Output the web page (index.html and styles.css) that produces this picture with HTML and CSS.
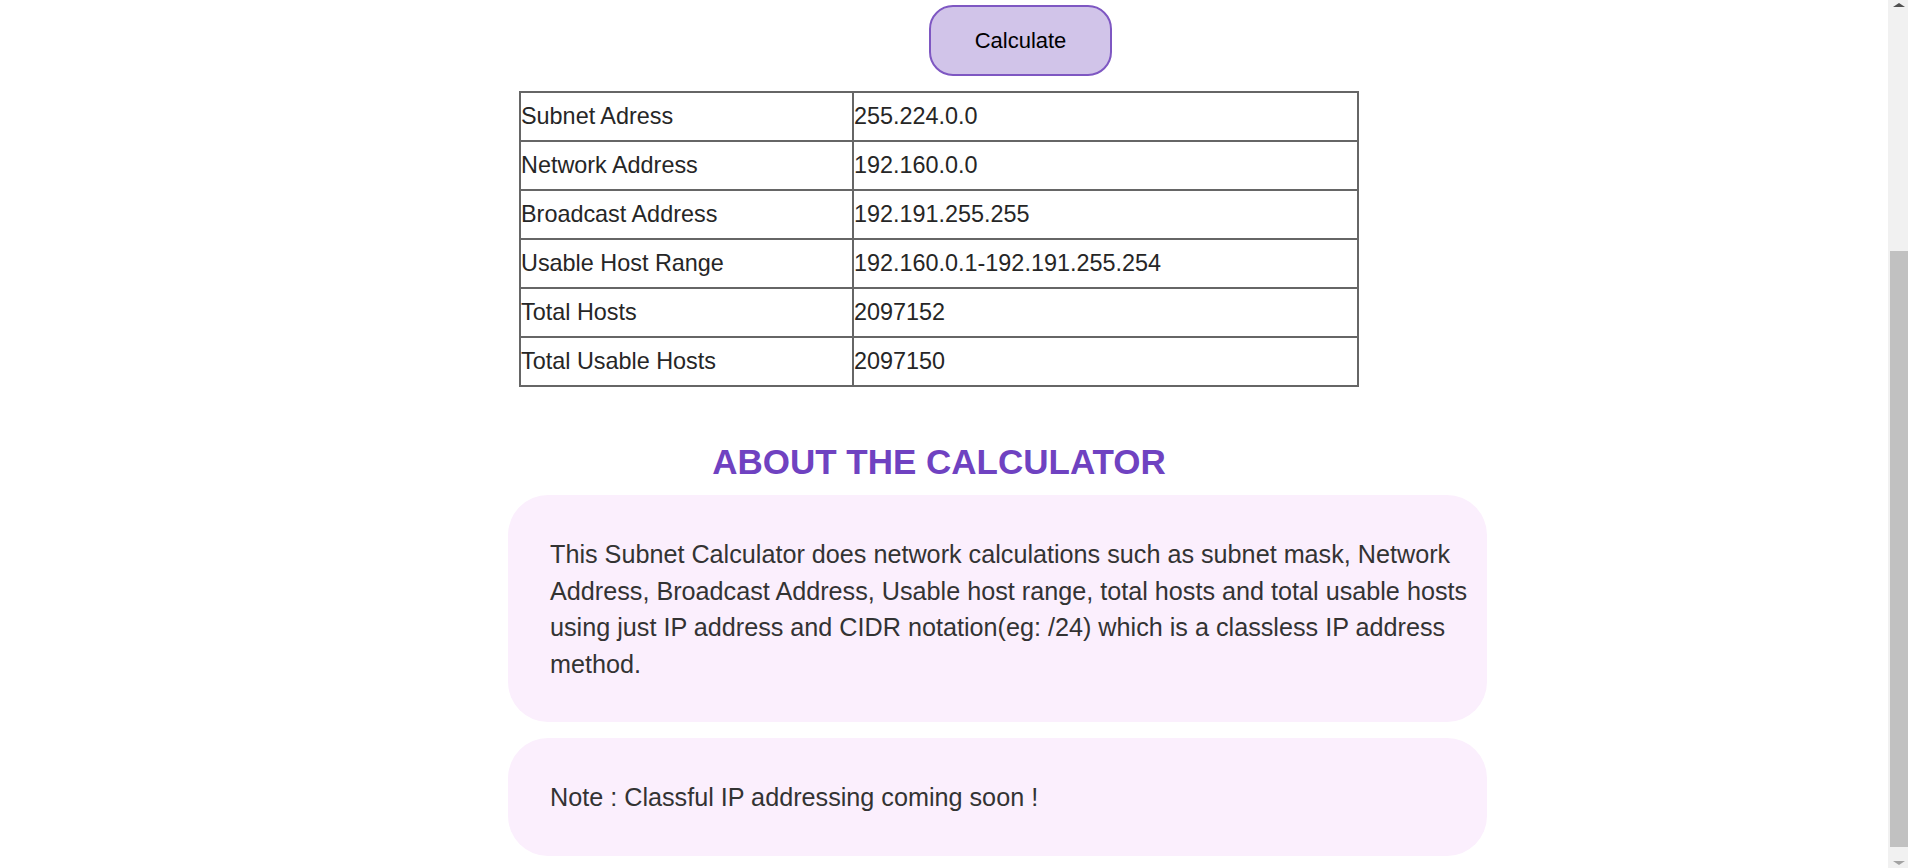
FILE: index.html
```html
<!DOCTYPE html>
<html lang="en">
<head>
<meta charset="utf-8">
<title>Subnet Calculator</title>
<link rel="stylesheet" href="styles.css">
</head>
<body>
<div class="page">
  <section class="calc">
    <div class="btn-row">
      <button class="calc-btn" type="button">Calculate</button>
    </div>
    <table class="result">
      <colgroup>
        <col class="col-label">
        <col class="col-value">
      </colgroup>
      <tbody>
        <tr><td>Subnet Adress</td><td>255.224.0.0</td></tr>
        <tr><td>Network Address</td><td>192.160.0.0</td></tr>
        <tr><td>Broadcast Address</td><td>192.191.255.255</td></tr>
        <tr><td>Usable Host Range</td><td>192.160.0.1-192.191.255.254</td></tr>
        <tr><td>Total Hosts</td><td>2097152</td></tr>
        <tr><td>Total Usable Hosts</td><td>2097150</td></tr>
      </tbody>
    </table>
    <h2 class="about-title">ABOUT THE CALCULATOR</h2>
  </section>
  <section class="about">
    <div class="card">
      <p>This Subnet Calculator does network calculations such as subnet mask, Network Address, Broadcast Address, Usable host range, total hosts and total usable hosts using just IP address and CIDR notation(eg: /24) which is a classless IP address method.</p>
    </div>
    <div class="card">
      <p>Note : Classful IP addressing coming soon !</p>
    </div>
  </section>
</div>
<div class="scrollbar">
  <div class="arrow arrow-up"></div>
  <div class="thumb"></div>
  <div class="arrow arrow-down"></div>
</div>
</body>
</html>
```

FILE: styles.css
```css
html, body {
  margin: 0;
  padding: 0;
  background: #ffffff;
  overflow: hidden;
}

body {
  font-family: "Liberation Sans", Arial, sans-serif;
  color: #2b2b2b;
}

.page {
  width: 1888px;
  height: 868px;
  display: flex;
  flex-direction: column;
}

.calc {
  width: 840px;
  margin-left: 519px;
  display: flex;
  flex-direction: column;
}

.btn-row {
  display: flex;
  padding-left: 410px;
  margin-top: 5px;
}

.calc-btn {
  width: 183px;
  height: 71px;
  box-sizing: border-box;
  border: 2px solid #7e57c2;
  border-radius: 24px;
  background: #d1c4e9;
  font-family: "Liberation Sans", Arial, sans-serif;
  font-size: 22px;
  color: #000000;
  padding: 0;
}

.result {
  margin-top: 15px;
  width: 840px;
  table-layout: fixed;
  border-collapse: separate;
  border-spacing: 0;
  border: 1px solid #666666;
  font-size: 23.4px;
  line-height: 27px;
  color: #262626;
}

.col-label {
  width: 333px;
}

.result td {
  border: 1px solid #666666;
  padding: 10px 1px 10px 0;
  white-space: nowrap;
}

.about-title {
  margin: 55px 0 0 0;
  font-size: 35px;
  line-height: 40px;
  font-weight: bold;
  color: #6f42c1;
  text-align: center;
}

.about {
  margin-top: 13px;
  margin-left: 508px;
  width: 979px;
  display: flex;
  flex-direction: column;
  gap: 16px;
}

.card {
  background: #fbeffd;
  border-radius: 40px;
  padding: 41px 14px 40px 42px;
}

.card p {
  margin: 0;
  font-size: 25.2px;
  line-height: 36.5px;
  color: #333333;
}

.scrollbar {
  position: fixed;
  top: 0;
  right: 0;
  width: 20px;
  height: 868px;
  background: #f1f1f1;
}

.thumb {
  position: absolute;
  left: 2px;
  right: 0;
  top: 251px;
  height: 596px;
  background: #c1c1c1;
}

.arrow {
  position: absolute;
  left: 5px;
  width: 0;
  height: 0;
  border-left: 6px solid transparent;
  border-right: 6px solid transparent;
}

.arrow-up {
  top: 3px;
  border-bottom: 4px solid #505050;
}

.arrow-down {
  bottom: 3px;
  border-top: 4px solid #a3a3a3;
}
```
